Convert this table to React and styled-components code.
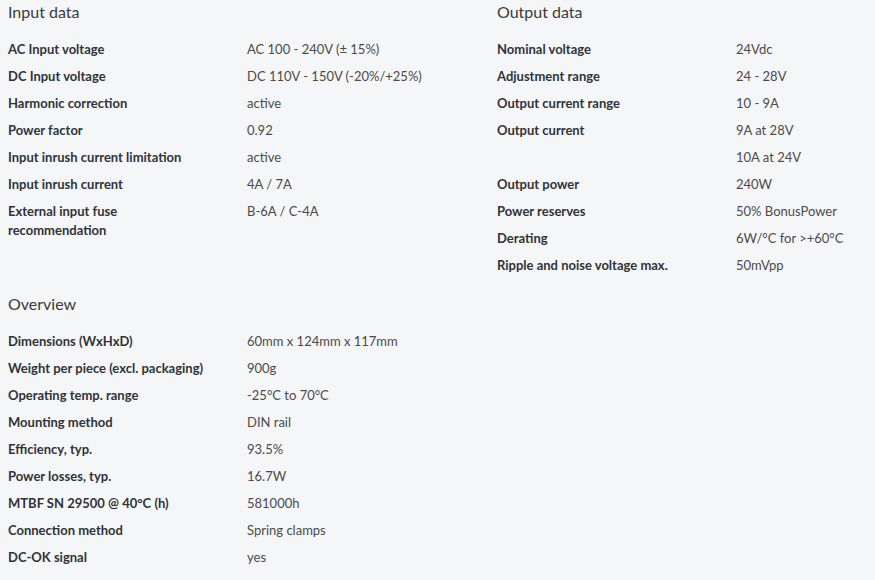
import React from "react";
import styled, { createGlobalStyle } from "styled-components";

const Global = createGlobalStyle`
  html, body { margin: 0; padding: 0; background: #f5f6f8; }
  body { font-family: Lato, "Liberation Sans", sans-serif; color: #333; }
`;

const Page = styled.div`
  display: grid;
  grid-template-columns: 489px 1fr;
  row-gap: 4px;
  padding: 0 8px;
  background: #f5f6f8;
  min-height: 580px;
  box-sizing: border-box;
`;

const Section = styled.section`
  display: flex;
  flex-direction: column;
`;

const Heading = styled.h2`
  margin: 0 0 12px;
  height: 24px;
  line-height: 23px;
  font-size: 16px;
  font-weight: 400;
  color: #3a3a3a;
`;

const Row = styled.div`
  display: grid;
  grid-template-columns: 239px 1fr;
  padding: 4px 0;
  font-size: 13px;
  line-height: 19px;
`;

const Label = styled.div`
  font-weight: 700;
  color: #2f3338;
  padding-right: 40px;
`;

const Value = styled.div`
  font-weight: 400;
  color: #4a4a4a;
`;

const data = [
  {
    title: "Input data",
    rows: [
      ["AC Input voltage", "AC 100 - 240V (± 15%)"],
      ["DC Input voltage", "DC 110V - 150V (-20%/+25%)"],
      ["Harmonic correction", "active"],
      ["Power factor", "0.92"],
      ["Input inrush current limitation", "active"],
      ["Input inrush current", "4A / 7A"],
      ["External input fuse recommendation", "B-6A / C-4A"],
    ],
  },
  {
    title: "Output data",
    rows: [
      ["Nominal voltage", "24Vdc"],
      ["Adjustment range", "24 - 28V"],
      ["Output current range", "10 - 9A"],
      ["Output current", "9A at 28V"],
      ["", "10A at 24V"],
      ["Output power", "240W"],
      ["Power reserves", "50% BonusPower"],
      ["Derating", "6W/°C for >+60°C"],
      ["Ripple and noise voltage max.", "50mVpp"],
    ],
  },
  {
    title: "Overview",
    rows: [
      ["Dimensions (WxHxD)", "60mm x 124mm x 117mm"],
      ["Weight per piece (excl. packaging)", "900g"],
      ["Operating temp. range", "-25°C to 70°C"],
      ["Mounting method", "DIN rail"],
      ["Efficiency, typ.", "93.5%"],
      ["Power losses, typ.", "16.7W"],
      ["MTBF SN 29500 @ 40°C (h)", "581000h"],
      ["Connection method", "Spring clamps"],
      ["DC-OK signal", "yes"],
    ],
  },
];

export default function App() {
  return (
    <>
      <Global />
      <Page>
        {data.map((s) => (
          <Section key={s.title}>
            <Heading>{s.title}</Heading>
            {s.rows.map(([l, v], i) => (
              <Row key={i}>
                <Label>{l}</Label>
                <Value>{v}</Value>
              </Row>
            ))}
          </Section>
        ))}
      </Page>
    </>
  );
}
